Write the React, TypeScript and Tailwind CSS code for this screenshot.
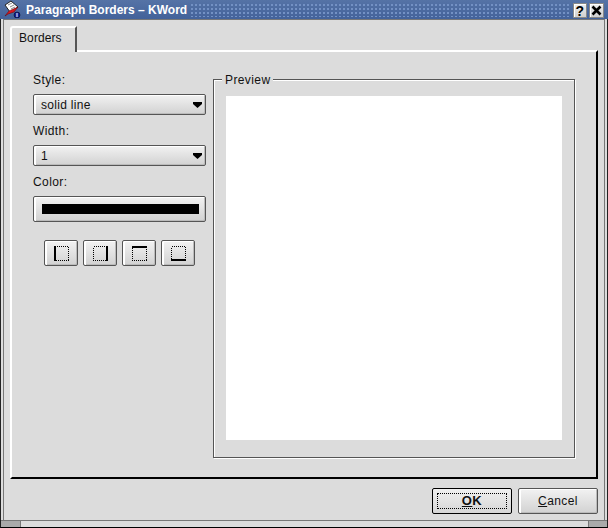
/*
this file:
    - KWord "Paragraph Borders" dialog, old KDE look
*/

const raised =
    "border border-[#555] rounded-[2px] bg-gradient-to-b from-[#f2f2f2] to-[#d2d2d2] shadow-[inset_2px_1px_0_#fff,inset_-1px_-1px_0_#bbb]";

function KWordIcon() {
    return (
        <svg width="20" height="18" viewBox="0 0 20 18" className="shrink-0">
            {/*paper*/}
            <path d="M2 5 L8 1 L15 7 L7 12 Z" fill="#fff" stroke="#222" strokeWidth="1" />
            <path d="M5 5 L9 3 M7 7 L11 5 M8 9 L12 7" stroke="#888" strokeWidth="1" />
            {/*red quill*/}
            <path d="M2 16 L6 11 L15 7 L11 12 L5 14 Z" fill="#d81820" stroke="#600" strokeWidth="0.5" />
            {/*info dot*/}
            <circle cx="14" cy="15" r="3" fill="#10209a" stroke="#000" strokeWidth="0.5" />
            <rect x="13.5" y="13" width="1" height="4" fill="#fff" />
        </svg>
    );
}

function TitleButton({ width, children }: { width: string; children: React.ReactNode }) {
    return (
        <div className={`mt-[3px] flex h-[15px] items-center justify-center border border-[#888] bg-gradient-to-b from-[#eee] to-[#d0d0d0] shadow-[inset_1px_1px_0_#fff] text-[14px] font-bold leading-none text-black ${width}`}>
            {children}
        </div>
    );
}

function Combo({ value }: { value: string }) {
    return (
        <div className={`flex h-[21px] w-[173px] items-center justify-between pl-[7px] pr-[3px] ${raised}`}>
            <span className="tracking-[0.3px]">{value}</span>
            <svg width="9" height="6" viewBox="0 0 9 6">
                <path d="M0 0 H9 V2 L4.5 6 L0 2 Z" fill="#000" />
            </svg>
        </div>
    );
}

//side: which edge of the dotted square is the solid one
function BorderButton({ side }: { side: "left" | "right" | "top" | "bottom" }) {
    return (
        <div className={`flex h-[26px] w-[34px] items-center justify-center ${raised}`}>
            <svg width="15" height="15" viewBox="0 0 15 15" shapeRendering="crispEdges">
                <rect x="0.5" y="0.5" width="14" height="14" fill="none" stroke="#000" strokeWidth="1" strokeDasharray="1 1" />
                {side === "left" && <rect x="0" y="0" width="2" height="15" fill="#000" />}
                {side === "right" && <rect x="13" y="0" width="2" height="15" fill="#000" />}
                {side === "top" && <rect x="0" y="0" width="15" height="2" fill="#000" />}
                {side === "bottom" && <rect x="0" y="13" width="15" height="2" fill="#000" />}
            </svg>
        </div>
    );
}

export default function App() {
    return (
        <div className="flex h-[528px] w-[608px] flex-col overflow-hidden bg-[#dcdcdc] font-['Liberation_Sans',Arial,sans-serif] text-[12px] tracking-[0.4px] text-[#111]">
            {/*title bar*/}
            <div className="flex h-[19px] shrink-0 items-start gap-[2px] bg-gradient-to-b from-[#5573a6] to-[#43629a] pr-[4px] pl-[3px]">
                <KWordIcon />
                <span className="ml-[1px] text-[12px] leading-[20px] font-bold tracking-[0px] whitespace-pre text-white">Paragraph Borders – KWord</span>
                <div className="mx-[1px] mt-[3px] h-[14px] flex-1 bg-[radial-gradient(circle,#7391c4_0.8px,transparent_1px)] bg-[length:4px_4px]" />
                <TitleButton width="w-[14px]">?</TitleButton>
                <TitleButton width="w-[15px]">
                    <svg width="11" height="11" viewBox="0 0 11 11">
                        <path d="M1.5 1.5 L9.5 9.5 M9.5 1.5 L1.5 9.5" stroke="#000" strokeWidth="2.6" />
                    </svg>
                </TitleButton>
            </div>

            {/*frame under the title*/}
            <div className="flex min-h-0 flex-1 flex-col border-x border-b border-x-[#222] border-b-black">
                {/*dialog body*/}
                <div className="mx-[2px] flex min-h-0 flex-1 flex-col border-x border-t border-[#777] px-[6px] pt-[6px]">
                    {/*tab*/}
                    <div className="relative z-10 -mb-[2px] flex h-[26px] w-[67px] items-center rounded-tl-[3px] border-t-2 border-r-2 border-l-2 border-t-white border-r-[#555] border-l-white bg-[#dcdcdc] pb-[4px] pl-[7px] tracking-[0.1px]">
                        Borders
                    </div>

                    {/*tab page*/}
                    <div className="flex h-[429px] w-[588px] shrink-0 gap-[7px] border-2 border-t-white border-r-black border-b-black border-l-white pt-[21px] pl-[21px]">
                        <div className="flex w-[173px] flex-col">
                            <div className="mb-[7px] h-[14px] leading-[14px]">Style:</div>
                            <Combo value="solid line" />
                            <div className="mt-[9px] mb-[7px] h-[14px] leading-[14px]">Width:</div>
                            <Combo value="1" />
                            <div className="mt-[9px] mb-[7px] h-[14px] leading-[14px]">Color:</div>
                            <div className={`flex h-[26px] items-center pr-[6px] pl-[8px] ${raised}`}>
                                <div className="h-[10px] w-full bg-black" />
                            </div>
                            <div className="mt-[18px] flex justify-center gap-[5px]">
                                <BorderButton side="left" />
                                <BorderButton side="right" />
                                <BorderButton side="top" />
                                <BorderButton side="bottom" />
                            </div>
                        </div>

                        {/*preview group*/}
                        <div className="relative mt-[6px] h-[379px] w-[362px] border border-[#555] p-[1px] shadow-[inset_1px_1px_0_#fff,1px_1px_0_#fff]">
                            <span className="absolute top-[-7px] left-[8px] bg-[#dcdcdc] px-[3px] leading-[14px]">Preview</span>
                            <div className="mt-[15px] ml-[11px] h-[344px] w-[336px] bg-white" />
                        </div>
                    </div>

                    {/*ok / cancel*/}
                    <div className="flex flex-1 justify-end gap-[6px] pt-[9px]">
                        <div className="flex h-[26px] w-[80px] items-center justify-center rounded-[2px] border border-black bg-gradient-to-b from-[#f0f0f0] to-[#d6d6d6] p-[4px]">
                            <div className="flex h-full w-full items-center justify-center border border-dotted border-black text-[13px] font-bold">
                                <span><u>O</u>K</span>
                            </div>
                        </div>
                        <div className={`flex h-[26px] w-[80px] items-center justify-center ${raised}`}>
                            <span><u>C</u>ancel</span>
                        </div>
                    </div>
                </div>

                {/*resize handle strip*/}
                <div className="flex h-[7px] shrink-0 border-t border-t-[#777] bg-[#dcdcdc]">
                    <div className="w-[20px] border-r border-[#777] bg-[#aaa]" />
                    <div className="flex-1" />
                    <div className="w-[19px] border-l border-[#777] bg-[#aaa]" />
                </div>
            </div>
        </div>
    );
}
